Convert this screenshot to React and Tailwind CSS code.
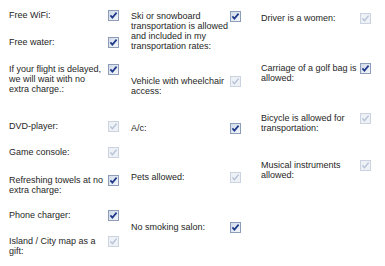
import React from 'react'

// label lines, checked state and row height for each column
const columns = [
  {
    width: 'w-[122px]',
    top: 'pt-[10px]',
    items: [
      { lines: ['Free WiFi:'], on: true, h: 'h-[27px]' },
      { lines: ['Free water:'], on: true, h: 'h-[27px]' },
      { lines: ['If your flight is delayed,', 'we will wait with no', 'extra charge.:'], on: true, h: 'h-[57px]' },
      { lines: ['DVD-player:'], on: false, h: 'h-[26px]' },
      { lines: ['Game console:'], on: false, h: 'h-[28px]' },
      { lines: ['Refreshing towels at no', 'extra charge:'], on: true, h: 'h-[35px]' },
      { lines: ['Phone charger:'], on: true, h: 'h-[26px]' },
      { lines: ['Island / City map as a', 'gift:'], on: false, h: 'h-[26px]' },
    ],
  },
  {
    width: 'w-[130px]',
    top: 'pt-[11px]',
    items: [
      {
        lines: ['Ski or snowboard', 'transportation is allowed', 'and included in my', 'transportation rates:'],
        on: true,
        h: 'h-[65px]',
      },
      { lines: ['Vehicle with wheelchair', 'access:'], on: false, h: 'h-[47px]' },
      { lines: ['A/c:'], on: true, h: 'h-[49px]' },
      { lines: ['Pets allowed:'], on: false, h: 'h-[50px]' },
      { lines: ['No smoking salon:'], on: true, h: 'h-[26px]' },
    ],
  },
  {
    width: 'flex-1',
    top: 'pt-[13px]',
    items: [
      { lines: ['Driver is a women:'], on: false, h: 'h-[50px]' },
      { lines: ['Carriage of a golf bag is', 'allowed:'], on: true, h: 'h-[50px]' },
      { lines: ['Bicycle is allowed for', 'transportation:'], on: false, h: 'h-[47px]' },
      { lines: ['Musical instruments', 'allowed:'], on: false, h: 'h-[26px]' },
    ],
  },
]

function Check({ on }) {
  if (on) {
    return (
      <svg width="11" height="11" viewBox="0 0 11 11" className="shrink-0 block">
        <defs>
          <linearGradient id="cbOn" x1="0" y1="0" x2="1" y2="1">
            <stop offset="0" stopColor="#cfd9e8" />
            <stop offset="1" stopColor="#f7f9fc" />
          </linearGradient>
        </defs>
        <rect x="0.5" y="0.5" width="10" height="10" fill="url(#cbOn)" stroke="#8d9db8" />
        <path d="M2.4 5.4 L4.4 7.6 L8.6 2.6" fill="none" stroke="#1f3a8a" strokeWidth="1.7" />
      </svg>
    )
  }
  return (
    <svg width="11" height="11" viewBox="0 0 11 11" className="shrink-0 block">
      <rect x="0.5" y="0.5" width="10" height="10" fill="#eef1f6" stroke="#cbd3e0" />
      <path d="M2.4 5.4 L4.4 7.6 L8.6 2.6" fill="none" stroke="#b4c1d6" strokeWidth="1.4" />
    </svg>
  )
}

export default function App() {
  return (
    <div className="w-[385px] h-[266px] bg-white flex pl-[9px] overflow-hidden text-[9px] leading-[10px] text-[#262626]" style={{ fontFamily: '"Liberation Sans", Arial, sans-serif' }}>
      {columns.map((col, ci) => (
        <div key={ci} className={`${col.width} ${col.top} flex flex-col`}>
          {col.items.map((item, i) => (
            <div key={i} className={`${item.h} flex items-start shrink-0`}>
              <div className="w-[99px] shrink-0 whitespace-nowrap">
                {item.lines.map((l, li) => (
                  <div key={li}>{l}</div>
                ))}
              </div>
              <Check on={item.on} />
            </div>
          ))}
        </div>
      ))}
    </div>
  )
}
